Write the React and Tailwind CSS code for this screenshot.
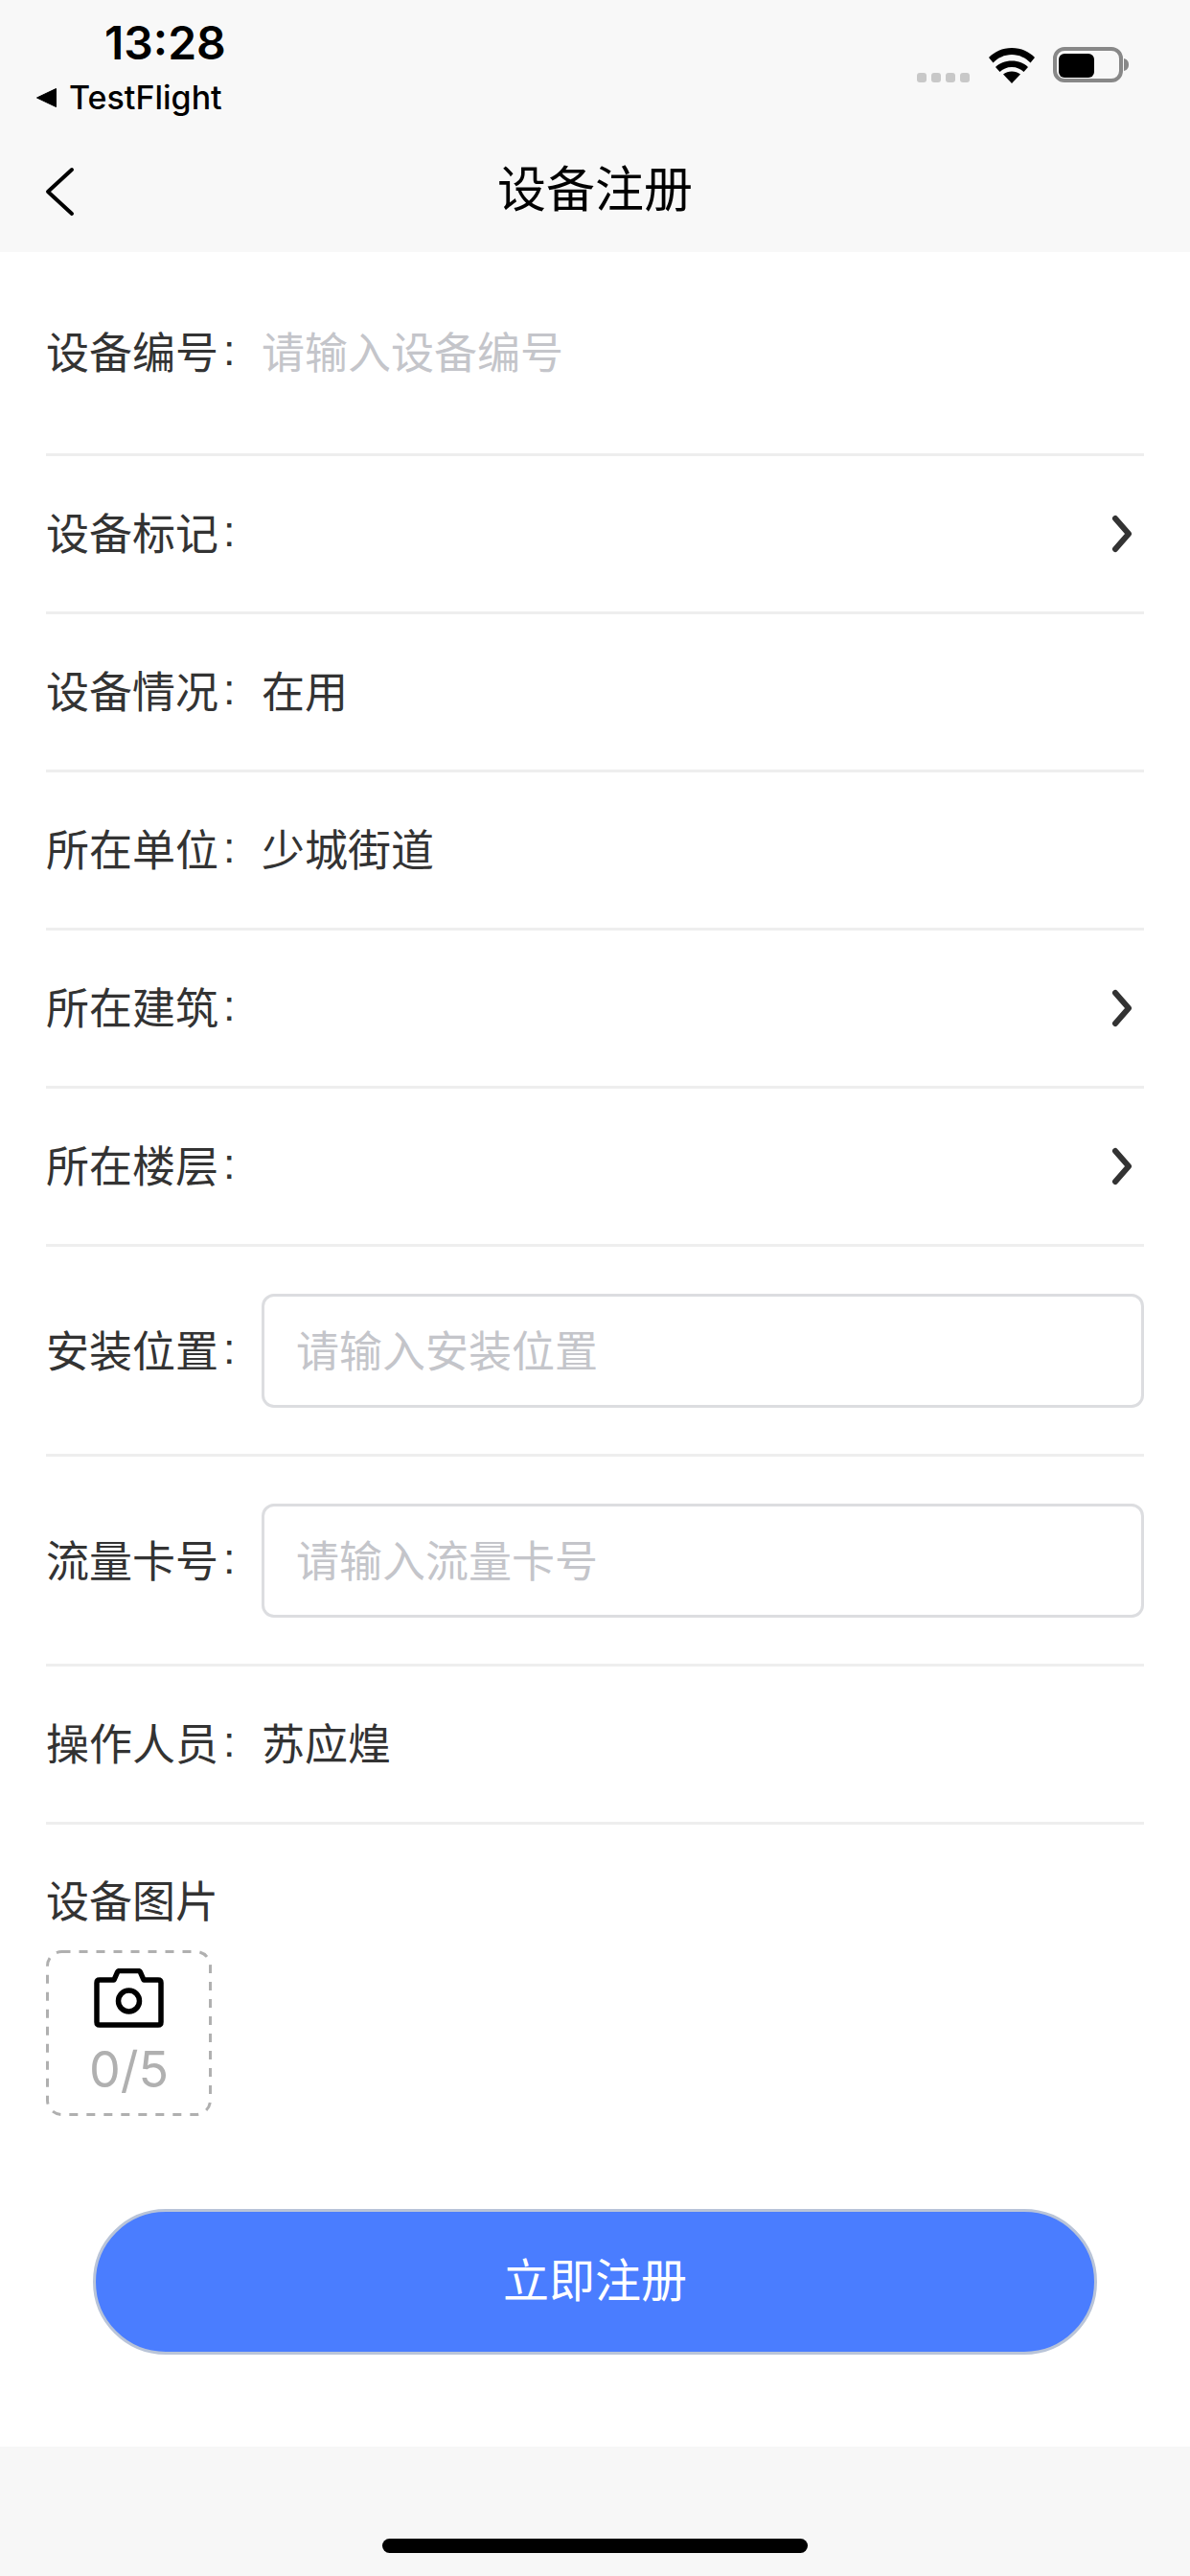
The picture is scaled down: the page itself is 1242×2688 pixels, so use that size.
import React from "react";

const CJK = "font-['Noto_Sans_CJK_SC','Noto_Sans_CJK_JP',sans-serif]";

function Chevron() {
  return (
    <svg width="24" height="44" viewBox="0 0 24 44" fill="none" className="mr-[10px] shrink-0">
      <path d="M4 6 L18 22 L4 38" stroke="#333" strokeWidth="6" strokeLinecap="round" strokeLinejoin="round" />
    </svg>
  );
}

function Label({ children, mb = "mb-[4px]" }) {
  return (
    <div className={`w-[225px] shrink-0 flex items-center ${mb}`}>
      <span>{children}</span>
      <span className="ml-[5px] font-['Liberation_Sans',sans-serif]">:</span>
    </div>
  );
}

function Row({ label, value, placeholder, chevron, h = "h-[165px]", items = "items-center", pt = "" }) {
  return (
    <div className={`${h} ${items} ${pt} flex border-b-[3px] border-[#eeeeee] text-[#333333]`}>
      <Label>{label}</Label>
      {value && <span className="flex-1 mb-[4px]">{value}</span>}
      {placeholder && <span className="flex-1 text-[#c4c5ca]">{placeholder}</span>}
      {chevron && <span className="flex-1" />}
      {chevron && <Chevron />}
    </div>
  );
}

function InputRow({ label, placeholder }) {
  return (
    <div className="h-[219px] flex items-center border-b-[3px] border-[#eeeeee] text-[#333333]">
      <Label mb="mb-[3px]">{label}</Label>
      <div className="flex-1 h-[119px] flex items-center pl-[33px] pb-[3px] rounded-[13px] border-[3px] border-[#dcdde0] text-[#c4c5ca]">
        {placeholder}
      </div>
    </div>
  );
}

export default function App() {
  return (
    <div className={`w-[1242px] h-[2688px] flex flex-col bg-white text-[45px] leading-[60px] ${CJK}`}>
      <header className="h-[263px] shrink-0 bg-[#f8f8f8] flex flex-col">
        <div className="h-[143px] relative flex">
          <div className="flex flex-col pl-[38px] pt-[20px] font-['Inter',sans-serif] text-black">
            <span className="pl-[71px] text-[48px] leading-[50px] font-semibold">13:28</span>
            <div className="flex items-center mt-[12px]">
              <svg width="21" height="20" viewBox="0 0 21 20" className="mr-[13px]">
                <path d="M20.500 0.500 V19.500 L0.500 10 Z" fill="#000" stroke="#000" strokeLinejoin="round" />
              </svg>
              <span className="text-[34px] leading-[40px] font-medium">TestFlight</span>
            </div>
          </div>
          <div className="ml-auto mr-[63px] mt-[50px] h-[37px] flex items-end">
            <div className="flex gap-[5px] mb-[1px] mr-[20px]">
              <span className="w-[10px] h-[10px] rounded-[3px] bg-[#c8c8c8]" />
              <span className="w-[10px] h-[10px] rounded-[3px] bg-[#c8c8c8]" />
              <span className="w-[10px] h-[10px] rounded-[3px] bg-[#c8c8c8]" />
              <span className="w-[10px] h-[10px] rounded-[3px] bg-[#c8c8c8]" />
            </div>
            <svg width="48" height="37" viewBox="0 0 48 37" className="mr-[19px]">
              <path d="M24 37 L15 27.5 C20 23.5 28 23.5 33 27.5 Z" fill="#000" />
              <path d="M24 13.5 C31 13.5 37 16 41 20 L36.5 25 C33.5 22 29 20 24 20 C19 20 14.5 22 11.5 25 L7 20 C11 16 17 13.5 24 13.5 Z" fill="#000" />
              <path d="M24 0 C34 0 42 4 48 10 L43.5 15.5 C38.5 10.5 32 7 24 7 C16 7 9.500 10.500 4.500 15.500 L0 10 C6 4 14 0 24 0 Z" fill="#000" />
            </svg>
            <svg width="80" height="38" viewBox="0 0 80 38">
              <rect x="2" y="2" width="69" height="33" rx="10" fill="none" stroke="#888" strokeWidth="4" />
              <rect x="6" y="7" width="37" height="25" rx="6" fill="#000" />
              <path d="M74 12 C78 13 79 16 79 18.500 C79 21 78 24 74 25 Z" fill="#888" />
            </svg>
          </div>
        </div>
        <div className="relative flex-1 flex items-center justify-center text-[51px] text-black pb-[19px]">
          <svg width="31" height="52" viewBox="0 0 31 52" className="absolute left-[47px] top-[31px]" fill="none">
            <path d="M28 3 L3 26 L28 49" stroke="#000" strokeWidth="4" strokeLinecap="round" strokeLinejoin="round" />
          </svg>
          设备注册
        </div>
      </header>

      <main className="flex-1 bg-white px-[48px] flex flex-col">
        <Row label="设备编号" placeholder="请输入设备编号" h="h-[213px]" items="items-start" pt="pt-[73px]" />
        <Row label="设备标记" chevron />
        <Row label="设备情况" value="在用" />
        <Row label="所在单位" value="少城街道" />
        <Row label="所在建筑" chevron />
        <Row label="所在楼层" chevron />
        <InputRow label="安装位置" placeholder="请输入安装位置" />
        <InputRow label="流量卡号" placeholder="请输入流量卡号" />
        <Row label="操作人员" value="苏应煌" />
        <div className="pt-[48px] text-[#333333]">设备图片</div>
        <div className="relative mt-[23px] w-[173px] h-[173px] flex flex-col items-center pt-[19px]">
          <svg width="173" height="173" viewBox="0 0 173 173" fill="none" className="absolute left-0 top-0">
            <rect x="1.500" y="1.500" width="170" height="170" rx="15" stroke="#b0b0b0" strokeWidth="3" strokeDasharray="9 9" />
          </svg>
          <svg width="75" height="62" viewBox="0 0 75 62" fill="none">
            <path d="M4 15 C4 13 5 12 7 12 L22 12 L25.500 4 C26 3 27 2.500 28 2.500 L47 2.500 C48 2.500 49 3 49.500 4 L53 12 L68 12 C70 12 71 13 71 15 L71 56 C71 58 70 59 68 59 L7 59 C5 59 4 58 4 56 Z" stroke="#000" strokeWidth="5.500" strokeLinejoin="round" />
            <circle cx="37.500" cy="34" r="11" stroke="#000" strokeWidth="5.500" />
          </svg>
          <span className="mt-[16px] text-[52px] leading-[56px] text-[#b0b0b0] font-['Inter',sans-serif]">0/5</span>
        </div>
        <button className="mt-[97px] mx-[49px] h-[152px] rounded-full bg-[#4a7dff] border-[3px] border-[#b9c4d8] text-white text-[48px] pb-[10px]">
          立即注册
        </button>
      </main>

      <footer className="h-[135px] shrink-0 bg-[#f7f7f7] flex justify-center pt-[96px]">
        <div className="w-[444px] h-[15px] rounded-full bg-black" />
      </footer>
    </div>
  );
}
